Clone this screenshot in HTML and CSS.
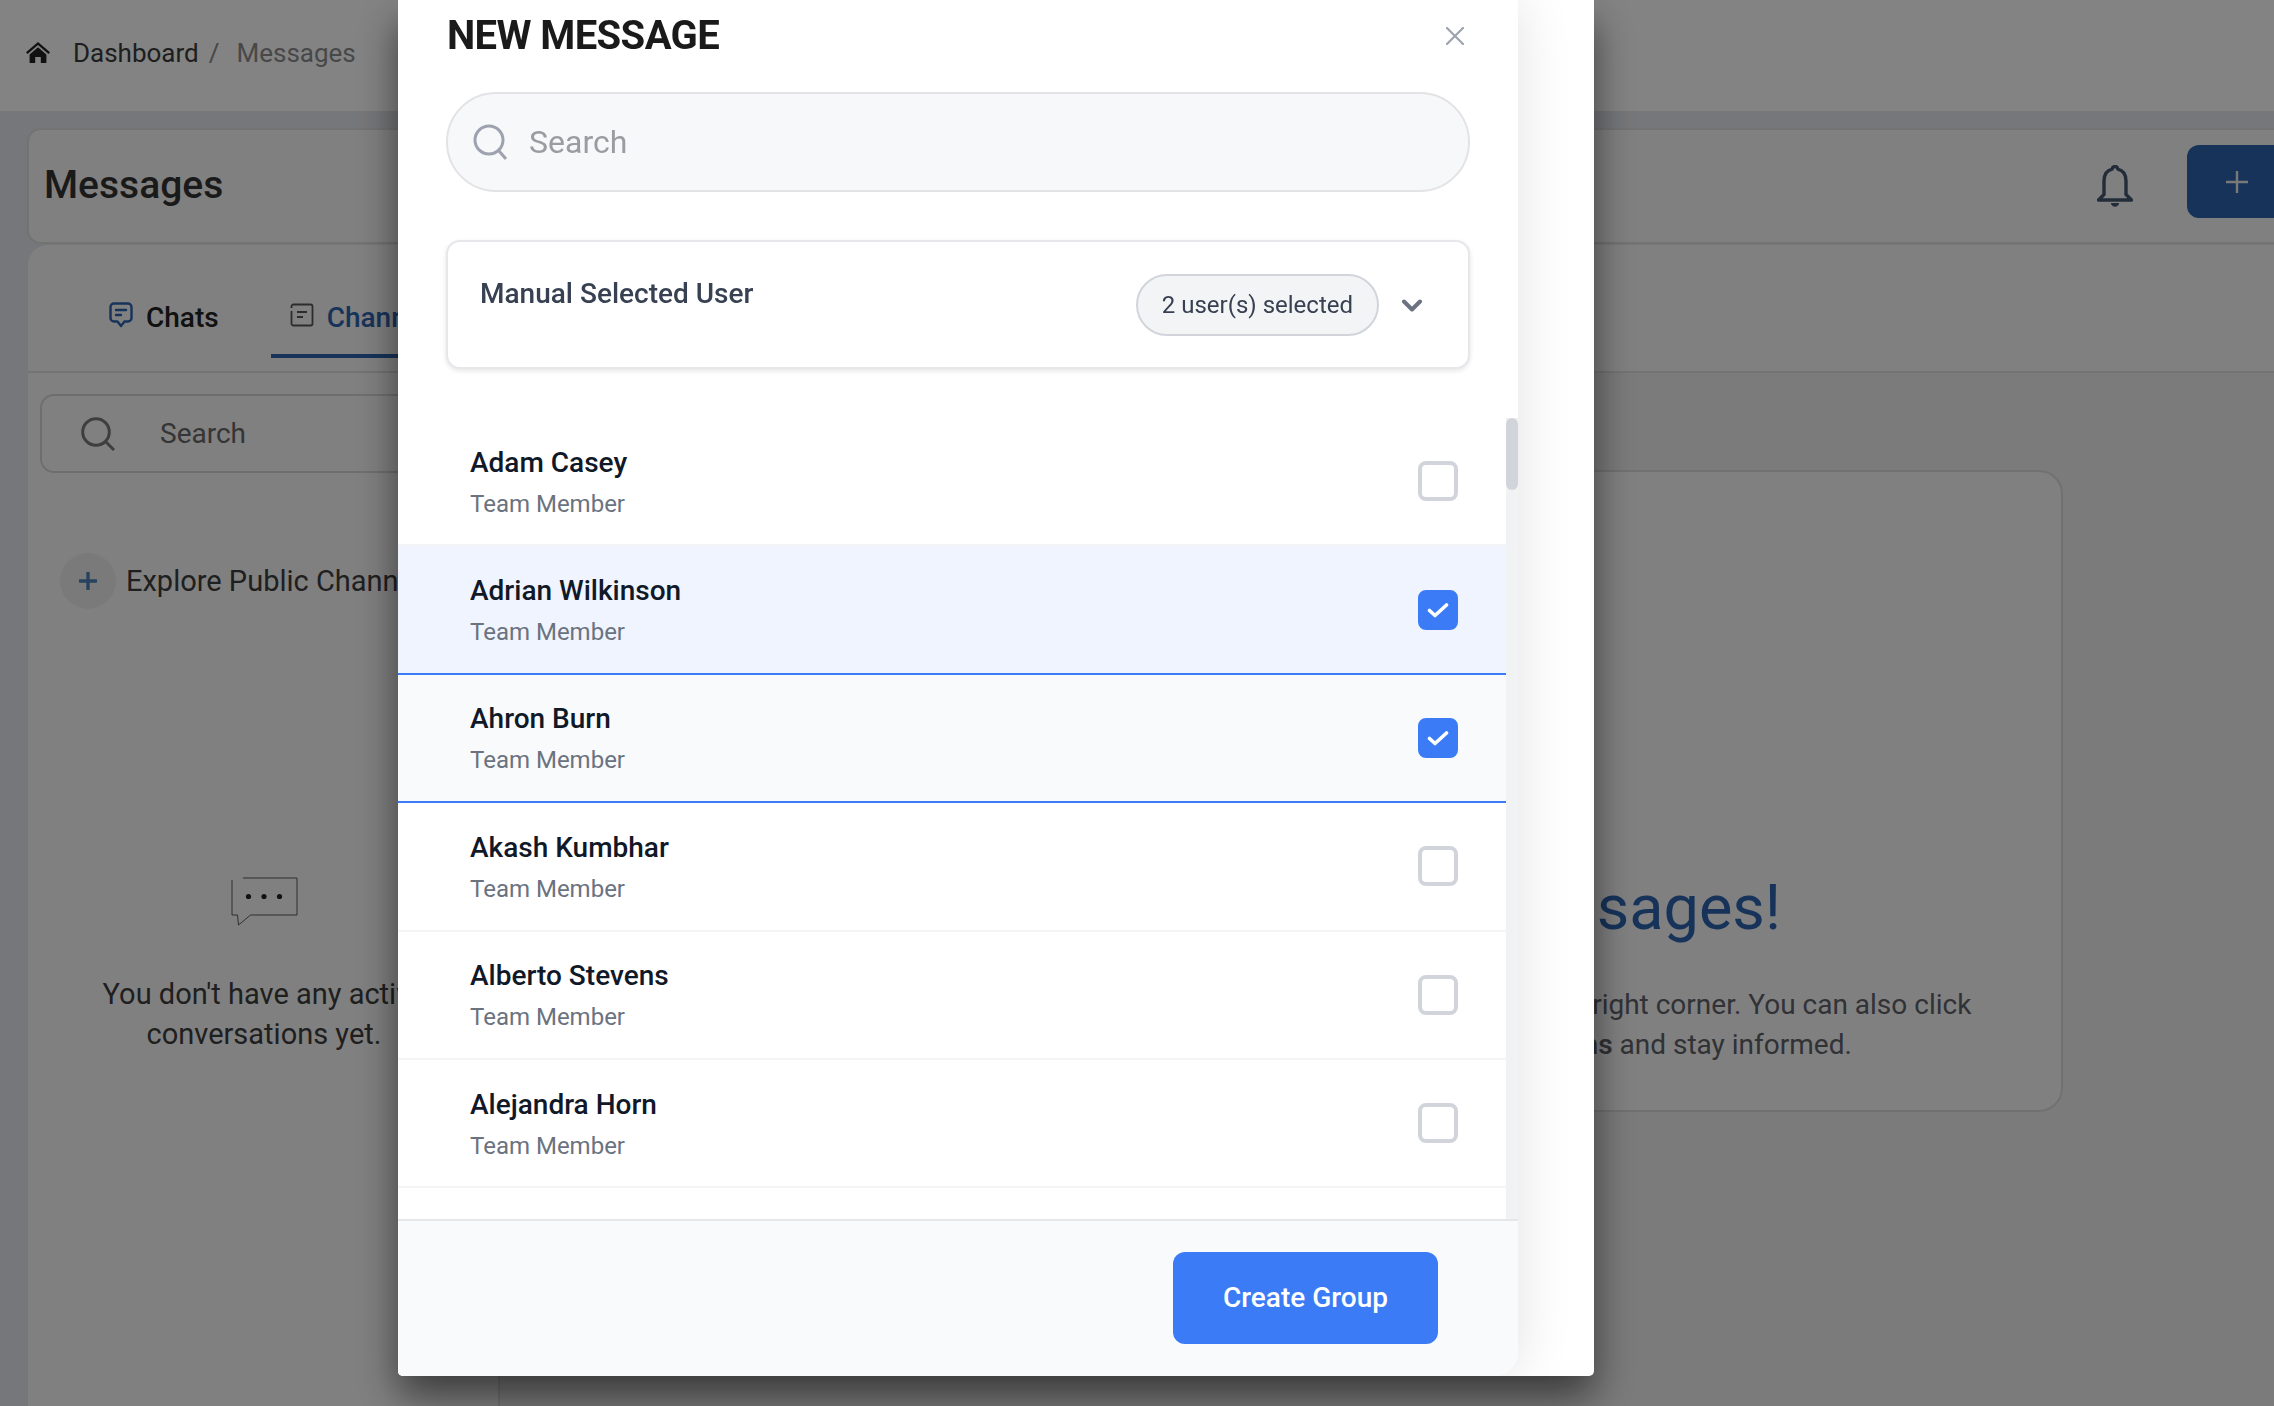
FILE: index.html
```html
<!DOCTYPE html>
<html lang="en">
<head>
<meta charset="utf-8">
<title>Messages</title>
<link rel="stylesheet" href="styles.css">
</head>
<body>
<div class="page">
  <header class="topbar">
    <svg class="home-icon" viewBox="0 0 24 21" aria-hidden="true"><path d="M12 0 0 10.2l1.5 1.7L12 3l10.500 8.900 1.500-1.700z"/><path d="M3.600 12.400 12 5.200l8.400 7.200V21h-5.600v-6H9.200v6H3.600z"/></svg>
    <span class="crumb">Dashboard</span>
    <span class="crumb-sep">/</span>
    <span class="crumb-current">Messages</span>
  </header>
  <main class="content">
    <section class="title-card">
      <h1 class="page-title">Messages</h1>
      <div class="title-actions">
        <svg class="bell-icon" viewBox="0 0 36 42" aria-hidden="true"><path d="M18 1.500c-1.600 0-2.600 1-2.800 2.600C9.500 5.400 7 10 7 16v13.500L1.500 35h33L29 29.500V16c0-6-2.500-10.600-8.200-11.900C20.600 2.500 19.600 1.500 18 1.500z" fill="none" stroke="currentColor" stroke-width="3.400" stroke-linejoin="round"/><path d="M13.800 38h8.400c-.4 2.300-2.100 3.700-4.200 3.700s-3.800-1.400-4.200-3.700z" fill="currentColor"/></svg>
        <button class="add-btn"><svg viewBox="0 0 22 28" aria-hidden="true"><path d="M11 3v22M0 14h22" fill="none" stroke="currentColor" stroke-width="2.400"/></svg></button>
      </div>
    </section>
    <section class="workspace">
      <nav class="tabs">
        <div class="tab">
          <svg class="tab-icon tab-icon-chat" viewBox="0 0 24 26" aria-hidden="true"><path d="M5 1.500h14a3.500 3.500 0 0 1 3.500 3.500v11a3.500 3.500 0 0 1-3.500 3.500h-3.500L12 24l-3.500-4.500H5A3.500 3.500 0 0 1 1.500 16V5A3.500 3.500 0 0 1 5 1.500z" fill="none" stroke="currentColor" stroke-width="2.400" stroke-linejoin="round"/><path d="M7 8h10M7 13h5" fill="none" stroke="currentColor" stroke-width="2.400" stroke-linecap="round"/></svg>
          <span class="tab-label">Chats</span>
        </div>
        <div class="tab tab-active">
          <svg class="tab-icon tab-icon-channel" viewBox="0 0 24 24" aria-hidden="true"><path d="M1.500 5V3.500a2 2 0 0 1 2-2h17a2 2 0 0 1 2 2v17a2 2 0 0 1-2 2h-17a2 2 0 0 1-2-2V8" fill="none" stroke="currentColor" stroke-width="1.800"/><path d="M7 9h10M7 14h6" fill="none" stroke="currentColor" stroke-width="1.800"/></svg>
          <span class="tab-label">Channels</span>
        </div>
      </nav>
      <div class="panes">
        <aside class="side-pane">
          <div class="side-search">
            <svg class="side-search-icon" viewBox="0 0 34 34" aria-hidden="true"><circle cx="15" cy="15" r="13.300" fill="none" stroke="currentColor" stroke-width="3"/><path d="m25 25 8 8" fill="none" stroke="currentColor" stroke-width="3"/></svg>
            <span>Search</span>
          </div>
          <div class="explore">
            <span class="explore-plus"><svg viewBox="0 0 18 18" aria-hidden="true"><path d="M9 1v16M1 9h16" fill="none" stroke="currentColor" stroke-width="3.400" stroke-linecap="round"/></svg></span>
            <span>Explore Public Channels</span>
          </div>
          <div class="empty">
            <svg class="empty-icon" viewBox="0 0 67 49" aria-hidden="true"><path d="M1 3v35h5.500l1 10 12-10H66V1H12" fill="none" stroke="#333" stroke-width=".8"/><circle cx="17.500" cy="19.500" r="2.600" fill="#222"/><circle cx="33" cy="19.500" r="2.600" fill="#222"/><circle cx="48.500" cy="19.500" r="2.600" fill="#222"/></svg>
            <p class="empty-text">You don't have any active<br>conversations yet.</p>
          </div>
        </aside>
        <div class="main-pane">
          <div class="welcome-card">
            <h2 class="welcome-title">You don't have any new messages!</h2>
            <p class="welcome-text">Hi! To start a new conversation with someone, click the plus button in the top right corner. You can also click<br><b>Explore Public Channels</b> to join the very latest team-wide <b>discussions</b> and stay informed.</p>
          </div>
        </div>
      </div>
    </section>
  </main>
</div>

<div class="overlay"></div>

<div class="modal">
  <div class="panel">
    <div class="modal-head">
      <h3 class="modal-title">NEW MESSAGE</h3>
      <svg class="close-icon" viewBox="0 0 18 18" aria-hidden="true"><path d="m1 1 16 16M17 1 1 17" fill="none" stroke="currentColor" stroke-width="2.200" stroke-linecap="round"/></svg>
    </div>
    <div class="modal-search">
      <svg class="modal-search-icon" viewBox="0 0 34 36" aria-hidden="true"><circle cx="16" cy="16" r="14" fill="none" stroke="currentColor" stroke-width="3"/><path d="m26 27 7 8" fill="none" stroke="currentColor" stroke-width="3"/></svg>
      <span>Search</span>
    </div>
    <div class="selected-card">
      <span class="selected-label">Manual Selected User</span>
      <div class="selected-right">
        <span class="selected-pill">2 user(s) selected</span>
        <svg class="chevron" viewBox="0 0 20 13" aria-hidden="true"><path d="m2 2.500 8 8 8-8" fill="none" stroke="currentColor" stroke-width="4" stroke-linecap="round" stroke-linejoin="round"/></svg>
      </div>
    </div>
    <div class="user-list">
      <div class="user-row">
        <div class="user-info"><span class="user-name">Adam Casey</span><span class="user-role">Team Member</span></div>
        <span class="check"></span>
      </div>
      <div class="user-row user-row-first">
        <div class="user-info"><span class="user-name">Adrian Wilkinson</span><span class="user-role">Team Member</span></div>
        <span class="check check-on"><svg viewBox="0 0 22 16" aria-hidden="true"><path d="m2.500 8.500 5.500 5L19.500 3" fill="none" stroke="#fff" stroke-width="3.600" stroke-linecap="round" stroke-linejoin="round"/></svg></span>
      </div>
      <div class="user-row user-row-selected">
        <div class="user-info"><span class="user-name">Ahron Burn</span><span class="user-role">Team Member</span></div>
        <span class="check check-on"><svg viewBox="0 0 22 16" aria-hidden="true"><path d="m2.500 8.500 5.500 5L19.500 3" fill="none" stroke="#fff" stroke-width="3.600" stroke-linecap="round" stroke-linejoin="round"/></svg></span>
      </div>
      <div class="user-row">
        <div class="user-info"><span class="user-name">Akash Kumbhar</span><span class="user-role">Team Member</span></div>
        <span class="check"></span>
      </div>
      <div class="user-row">
        <div class="user-info"><span class="user-name">Alberto Stevens</span><span class="user-role">Team Member</span></div>
        <span class="check"></span>
      </div>
      <div class="user-row">
        <div class="user-info"><span class="user-name">Alejandra Horn</span><span class="user-role">Team Member</span></div>
        <span class="check"></span>
      </div>
      <div class="scroll-track"><div class="scroll-thumb"></div></div>
    </div>
    <div class="modal-foot">
      <button class="create-btn">Create Group</button>
    </div>
  </div>
</div>
</body>
</html>
```
FILE: styles.css
```css
* { box-sizing: border-box; }
html, body { margin: 0; height: 100%; overflow: hidden; }
body { font-family: Roboto, "Liberation Sans", sans-serif; color: #333; background: #e3e4ea; }
h1, h2, h3, p { margin: 0; }

.page { width: 2274px; height: 1406px; overflow: hidden; }

.topbar { height: 111px; background: #fcfcfc; display: flex; align-items: center; padding: 0 0 6px 26px; font-size: 26px; }
.home-icon { width: 24px; height: 21px; fill: #222; margin-right: 23px; flex: none; }
.crumb { color: #3a3a3a; }
.crumb-sep { color: #888; margin: 0 17px 0 10px; }
.crumb-current { color: #8a8a8a; }

.content { padding: 17px 0 0 27px; width: 2320px; }

.title-card { height: 116px; background: #f6f6f6; border: 2px solid #dcdcdc; border-radius: 14px; display: flex; align-items: center; justify-content: space-between; padding: 0 0 0 15px; }
.page-title { font-size: 39px; font-weight: 500; color: #333; padding-bottom: 2px; }
.title-actions { display: flex; align-items: center; }
.bell-icon { width: 36px; height: 42px; color: #44566f; margin-right: 54px; }
.add-btn { width: 120px; height: 73px; border: 0; border-radius: 12px; background: #2c62ad; color: #e8e8e8; padding: 0 0 0 39px; margin: 0 11px 9px 0; display: flex; align-items: center; }
.add-btn svg { width: 22px; height: 28px; }

.workspace { margin: 1px 0 0 1px; background: #f6f6f6; border-radius: 20px 0 0 0; height: 1200px; }
.tabs { height: 128px; display: flex; padding-left: 61px; border-bottom: 2px solid #dcdcdc; }
.tab { display: flex; align-items: center; padding: 36px 20px 0; height: 113px; gap: 13px; border-bottom: 4px solid transparent; }
.tab-active { margin-left: 32px; padding-left: 19px; border-bottom-color: #2c62ad; }
.tab-label { font-size: 28px; font-weight: 500; color: #222; }
.tab-active .tab-label { color: #2c62ad; }
.tab-icon { width: 24px; height: 26px; flex: none; margin-top: -6px; }
.tab-icon-chat { color: #2c62ad; }
.tab-icon-channel { color: #555; height: 24px; }

.panes { display: flex; height: 1100px; }
.side-pane { width: 472px; flex: none; background: #f6f6f6; border-right: 2px solid #dcdcdc; padding: 21px 0 0 12px; }
.side-search { width: 600px; height: 79px; border: 2px solid #d4d4d4; border-radius: 14px; display: flex; align-items: center; padding-left: 39px; gap: 45px; font-size: 28px; color: #666; }
.side-search-icon { width: 34px; height: 34px; color: #777; flex: none; }
.explore { display: flex; align-items: center; margin: 80px 0 0 20px; gap: 10px; font-size: 29px; color: #3c3c3c; white-space: nowrap; }
.explore-plus { width: 56px; height: 56px; border-radius: 50%; background: #eaeaea; display: flex; align-items: center; justify-content: center; color: #4b7fb5; flex: none; }
.explore-plus svg { width: 18px; height: 18px; }
.empty { margin: 268px 0 0 -11px; display: flex; flex-direction: column; align-items: center; width: 470px; }
.empty-icon { width: 67px; height: 49px; }
.empty-text { margin-top: 48px; font-size: 29px; line-height: 40px; text-align: center; color: #3c3c3c; white-space: nowrap; }

.main-pane { flex: 1; background: #ebebeb; padding: 97px 0 0 40px; }
.welcome-card { width: 1523px; height: 642px; background: #f6f6f6; border: 2px solid #d8d8d8; border-radius: 24px; text-align: center; padding-top: 398px; }
.welcome-title { font-size: 63px; font-weight: 400; line-height: 76px; color: #2c62ad; white-space: nowrap; padding-right: 12px; }
.welcome-text { margin-top: 39px; font-size: 28px; line-height: 40px; color: #5e6068; white-space: nowrap; }
.welcome-text b { font-weight: 600; }

.overlay { position: fixed; inset: 0; background: rgba(0, 0, 0, .48); }

.modal { position: fixed; left: 398px; top: 0; width: 1196px; height: 1376px; background: #fff; border-radius: 0 0 5px 5px; overflow: hidden; box-shadow: 0 20px 40px rgba(0, 0, 0, .55); }
.panel { width: 1120px; height: 100%; background: #fff; display: flex; flex-direction: column; border-radius: 0 0 24px 0; box-shadow: 0 0 56px rgba(0, 0, 0, .12); }
.modal-head { height: 70px; flex: none; display: flex; align-items: center; justify-content: space-between; padding: 0 54px 0 49px; }
.modal-title { font-size: 40px; font-weight: 700; color: #1a1a1a; letter-spacing: -.6px; }
.close-icon { width: 18px; height: 18px; color: #9ca3af; margin-top: 2px; }
.modal-search { margin: 22px 48px 0; height: 100px; flex: none; background: #f7f8fa; border: 2px solid #e3e3e5; border-radius: 50px; display: flex; align-items: center; padding-left: 25px; gap: 22px; font-size: 32px; color: #9a9ca2; }
.modal-search-icon { width: 34px; height: 36px; color: #9ca3af; flex: none; }
.selected-card { margin: 48px 48px 0; height: 129px; flex: none; background: #fff; border: 2px solid #e5e7eb; border-radius: 14px; box-shadow: 0 2px 5px rgba(0, 0, 0, .1); display: flex; justify-content: space-between; align-items: flex-start; padding: 32px 46px 0 32px; }
.selected-label { font-size: 28px; font-weight: 500; line-height: 40px; color: #374151; }
.selected-right { display: flex; align-items: center; gap: 23px; }
.selected-pill { height: 62px; display: flex; align-items: center; padding: 0 24px; background: #f3f4f6; border: 2px solid #d1d5db; border-radius: 31px; font-size: 24px; color: #374151; white-space: nowrap; }
.chevron { width: 20px; height: 13px; color: #6b7280; }

.user-list { position: relative; margin-top: 49px; flex: 1; min-height: 0; overflow: hidden; padding-right: 12px; }
.user-row { height: 128.400px; padding: 0 48px 0 72px; display: flex; align-items: center; justify-content: space-between; border-bottom: 2px solid #f3f4f6; background: #fff; }
.user-row-first { background: #eff4fe; border-bottom-color: #3b7bf6; }
.user-row-selected { background: #f9fafb; border-bottom-color: #3b7bf6; }
.user-info { display: flex; flex-direction: column; padding-top: 4px; }
.user-name { font-size: 28px; font-weight: 500; line-height: 40px; color: #111827; }
.user-role { font-size: 24px; line-height: 40px; margin-top: 1px; color: #6b7280; }
.check { width: 40px; height: 40px; border: 4px solid #d1d5db; border-radius: 8px; background: #fff; display: flex; align-items: center; justify-content: center; flex: none; }
.check-on { background: #3b7bf6; border-color: #3b7bf6; }
.check-on svg { width: 22px; height: 16px; }
.scroll-track { position: absolute; top: 0; right: 0; bottom: 0; width: 12px; background: #f1f2f4; }
.scroll-thumb { height: 72px; background: #d1d5db; border-radius: 6px; }

.modal-foot { height: 157px; flex: none; background: #f9fafb; border-top: 2px solid #e5e7eb; border-radius: 0 0 24px 0; display: flex; justify-content: flex-end; padding: 31px 80px 0 0; }
.create-btn { width: 265px; height: 92px; border: 0; border-radius: 12px; background: #3b7bf6; color: #fff; font-family: inherit; font-size: 28px; font-weight: 500; padding: 0 0 2px; }
```
